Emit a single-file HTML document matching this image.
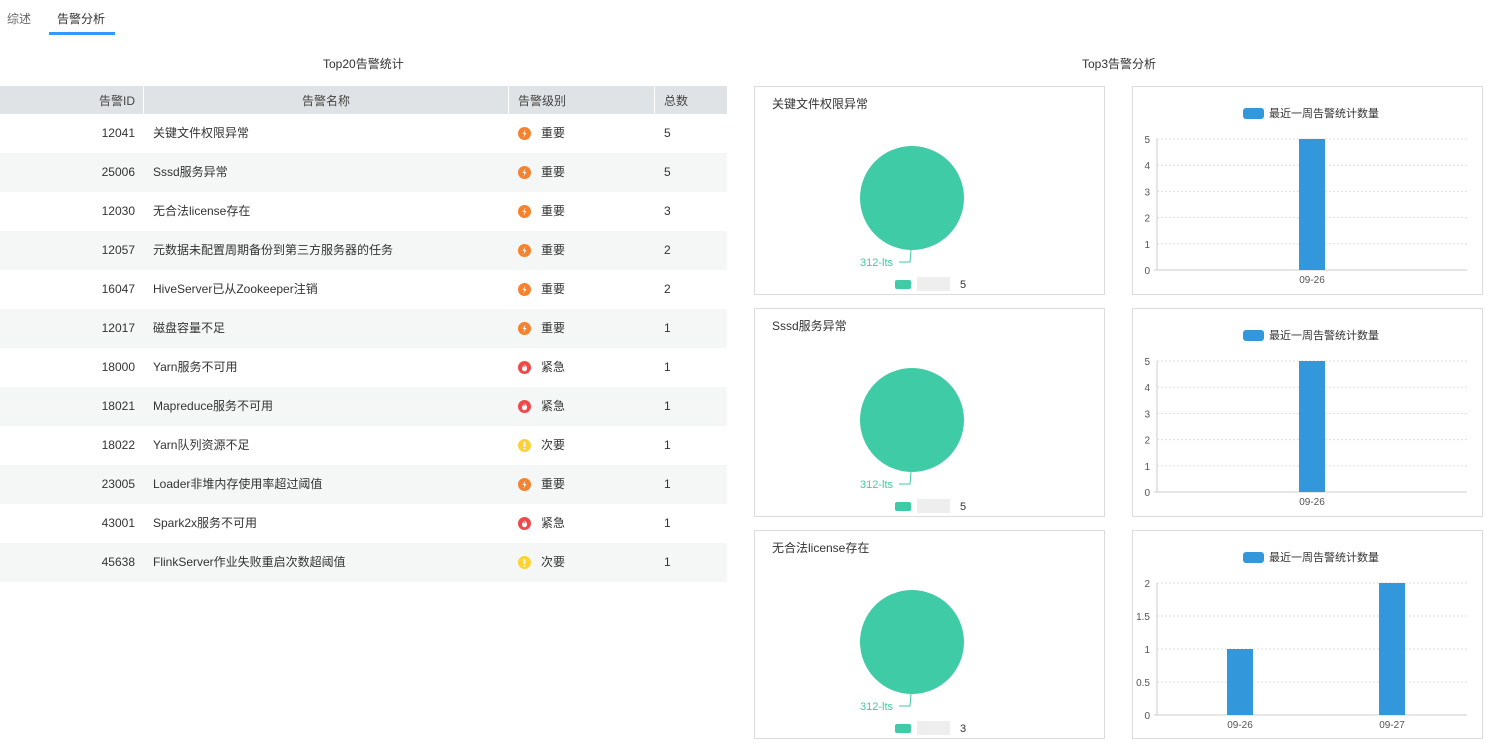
<!DOCTYPE html>
<html><head><meta charset="utf-8"><style>
*{margin:0;padding:0;box-sizing:border-box}
body{width:1487px;height:743px;background:#fff;font-family:"Liberation Sans","Noto Sans CJK SC",sans-serif;font-size:12px;color:#333;position:relative;overflow:hidden}
.a{position:absolute;white-space:nowrap}
.row{position:absolute;left:0;width:727px;height:39px}
.row.alt{background:#f5f7f7}
.row span{position:absolute;top:12px;line-height:14px}
.ic{position:absolute;left:518px;top:13px;width:13px;height:13px;border-radius:50%}
</style></head><body>
<div class="a" style="left:7px;top:10px;color:#666">综述</div>
<div class="a" style="left:57px;top:10px;color:#333">告警分析</div>
<div class="a" style="left:49px;top:32px;width:66px;height:3px;background:#3399ff"></div>
<div class="a" style="left:323px;top:55px">Top20告警统计</div>
<div class="a" style="left:1082px;top:55px">Top3告警分析</div>
<div class="a" style="left:0;top:86px;width:727px;height:28px;background:#e0e3e5"></div>
<div class="a" style="left:143px;top:86px;width:1px;height:28px;background:#fff"></div>
<div class="a" style="left:508px;top:86px;width:1px;height:28px;background:#fff"></div>
<div class="a" style="left:654px;top:86px;width:1px;height:28px;background:#fff"></div>
<div class="a" style="left:99px;top:92px;color:#444">告警ID</div>
<div class="a" style="left:302px;top:92px;color:#444">告警名称</div>
<div class="a" style="left:518px;top:92px;color:#444">告警级别</div>
<div class="a" style="left:664px;top:92px;color:#444">总数</div>
<div id="rows"></div>
<script>
var d=[["12041","关键文件权限异常","o","重要",5],["25006","Sssd服务异常","o","重要",5],["12030","无合法license存在","o","重要",3],["12057","元数据未配置周期备份到第三方服务器的任务","o","重要",2],["16047","HiveServer已从Zookeeper注销","o","重要",2],["12017","磁盘容量不足","o","重要",1],["18000","Yarn服务不可用","r","紧急",1],["18021","Mapreduce服务不可用","r","紧急",1],["18022","Yarn队列资源不足","y","次要",1],["23005","Loader非堆内存使用率超过阈值","o","重要",1],["43001","Spark2x服务不可用","r","紧急",1],["45638","FlinkServer作业失败重启次数超阈值","y","次要",1]];
var c={o:"#f5822f",r:"#f0494a",y:"#fcd235"};var h="";
d.forEach(function(r,i){h+='<div class="row'+(i%2?' alt':'')+'" style="top:'+(114+i*39)+'px"><span style="right:592px">'+r[0]+'</span><span style="left:153px">'+r[1]+'</span><div class="ic" style="background:'+c[r[2]]+'"><svg width="13" height="13" viewBox="0 0 13 13">'+(r[2]=="y"?'<rect x="5.7" y="3" width="1.6" height="5" fill="#fff"/><rect x="5.7" y="9" width="1.6" height="1.6" fill="#fff"/>':r[2]=="o"?'<path d="M7.5 2.5 L4.5 7 H6.5 L5.5 10.5 L8.5 6 H6.5 Z" fill="#fff"/>':'<path d="M6.5 3 C8 5 9.5 6 9 8 C8.6 9.6 7.5 10.3 6.5 10.3 C5.5 10.3 4.2 9.6 4 8 C3.8 6.5 5 5.5 5.2 4.5 C5.8 5.5 6 6 6.5 6.3 C6.8 5.3 6.8 4 6.5 3Z" fill="#fff"/>')+'</svg></div><span style="left:541px">'+r[3]+'</span><span style="left:664px">'+r[4]+'</span></div>'});
document.getElementById("rows").innerHTML=h;
</script>
<svg class="a" style="left:0;top:0" width="1487" height="743" font-family="Liberation Sans,Noto Sans CJK SC,sans-serif">
<g id="p"></g>
</svg>
<script>
var s="",t=["关键文件权限异常","Sssd服务异常","无合法license存在"],n=[5,5,3];
for(var k=0;k<3;k++){var o=[0,222,444][k];
s+='<rect x="754.5" y="'+(86.5+o)+'" width="350" height="208" fill="#fff" stroke="#dcdcdc"/>';
s+='<text x="772" y="'+(108+o)+'" font-size="12" fill="#333">'+t[k]+'</text>';
s+='<circle cx="912" cy="'+(198+o)+'" r="52" fill="#3ecba5"/>';
s+='<polyline points="911,'+(250+o)+' 910,'+(262+o)+' 899,'+(262+o)+'" fill="none" stroke="#3ecba5"/>';
s+='<text x="860" y="'+(266+o)+'" font-size="11" fill="#3ecba5">312-lts</text>';
s+='<rect x="895" y="'+(280+o)+'" width="16" height="9" rx="2" fill="#3ecba5"/><rect x="917" y="'+(277+o)+'" width="33" height="14" fill="#eee"/>';
s+='<text x="960" y="'+(288+o)+'" font-size="11" fill="#333">'+n[k]+'</text>';
s+='<rect x="1132.5" y="'+(86.5+o)+'" width="350" height="208" fill="#fff" stroke="#dcdcdc"/>';
s+='<rect x="1243" y="'+(108+o)+'" width="21" height="11" rx="3" fill="#3398db"/><text x="1269" y="'+(117+o)+'" font-size="11" fill="#333">最近一周告警统计数量</text>';
var tp=139+o,bt=270+o;if(k==2){tp=583;bt=715;}
var lab=k==2?["0","0.5","1","1.5","2"]:["0","1","2","3","4","5"];
for(var j=0;j<lab.length;j++){var y=bt-(bt-tp)*j/(lab.length-1);
if(j>0)s+='<line x1="1157" x2="1467" y1="'+y+'" y2="'+y+'" stroke="#ddd" stroke-dasharray="2,2"/>';
s+='<text x="1150" y="'+(y+4)+'" font-size="10" fill="#555" text-anchor="end">'+lab[j]+'</text>';}
s+='<line x1="1157" x2="1157" y1="'+tp+'" y2="'+bt+'" stroke="#ccc"/><line x1="1154" x2="1467" y1="'+bt+'" y2="'+bt+'" stroke="#ccc"/>';
if(k<2){s+='<rect x="1299" y="'+tp+'" width="26" height="'+(bt-tp)+'" fill="#3398db"/><text x="1312" y="'+(bt+13)+'" font-size="10" fill="#555" text-anchor="middle">09-26</text>';}
else{s+='<rect x="1227" y="649" width="26" height="66" fill="#3398db"/><rect x="1379" y="583" width="26" height="132" fill="#3398db"/><text x="1240" y="728" font-size="10" fill="#555" text-anchor="middle">09-26</text><text x="1392" y="728" font-size="10" fill="#555" text-anchor="middle">09-27</text>';}
}
document.getElementById("p").innerHTML=s;
</script>
</body></html>
